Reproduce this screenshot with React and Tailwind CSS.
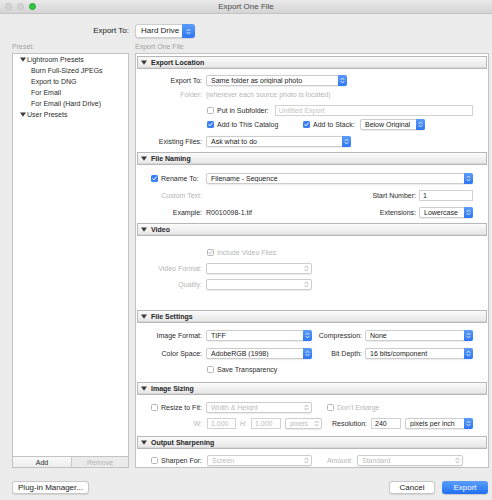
import React from 'react';

const Arrows = ({ color }) => (
    <svg width="5" height="7" viewBox="0 0 5 7" fill="none" stroke={color} strokeWidth="0.9" strokeLinecap="round" strokeLinejoin="round">
        <path d="M1 2.6 L2.5 1.1 L4 2.6" />
        <path d="M1 4.4 L2.5 5.9 L4 4.4" />
    </svg>
);

const Tri = () => (
    <svg width="6" height="5" viewBox="0 0 6 5" className="shrink-0">
        <polygon points="0,0.5 6,0.5 3,4.8" fill="#3a3a3a" />
    </svg>
);

function Popup({ value, className = '', disabled }) {
    return (
        <div className={`flex h-[11px] items-center rounded-[2px] border border-[#cdcdcd] bg-white shadow-[0_0.5px_1px_rgba(0,0,0,0.08)] ${className}`}>
            <span className={`flex-1 truncate pl-[4px] leading-none ${disabled ? 'text-[#bcbcbc]' : 'text-[#222]'}`}>{value}</span>
            {disabled ? (
                <span className="flex h-full w-[9px] items-center justify-center"><Arrows color="#a8a8a8" /></span>
            ) : (
                <span className="-my-px -mr-px flex h-[11px] w-[9px] items-center justify-center rounded-r-[2px] bg-gradient-to-b from-[#5a9cf9] to-[#2f76f5]"><Arrows color="#fff" /></span>
            )}
        </div>
    );
}

function Field({ value, placeholder, className = '', disabled }) {
    return (
        <div className={`flex h-[11px] items-center border border-[#d2d2d2] bg-white pl-[3px] leading-none ${className}`}>
            {value ? <span className={disabled ? 'text-[#bcbcbc]' : 'text-[#222]'}>{value}</span> : <span className="text-[#c4c4c4]">{placeholder}</span>}
        </div>
    );
}

function Check({ on, disabled }) {
    if (on && !disabled) {
        return (
            <span className="flex h-[7px] w-[7px] shrink-0 items-center justify-center rounded-[1.5px] bg-[#3b80f6]">
                <svg width="5" height="5" viewBox="0 0 5 5" fill="none" stroke="#fff" strokeWidth="1" strokeLinecap="round" strokeLinejoin="round"><path d="M0.8 2.6 L2 3.8 L4.2 1" /></svg>
            </span>
        );
    }
    return (
        <span className="flex h-[7px] w-[7px] shrink-0 items-center justify-center rounded-[1.5px] border border-[#b8b8b8] bg-white">
            {on && <svg width="5" height="5" viewBox="0 0 5 5" fill="none" stroke="#bdbdbd" strokeWidth="1" strokeLinecap="round" strokeLinejoin="round"><path d="M0.8 2.6 L2 3.8 L4.2 1" /></svg>}
        </span>
    );
}

const Label = ({ children, dim, className = 'w-[65px]' }) => (
    <span className={`shrink-0 text-right leading-none ${dim ? 'text-[#b6b6b6]' : 'text-[#2b2b2b]'} ${className}`}>{children}</span>
);

const Header = ({ title }) => (
    <div className="flex h-[13px] shrink-0 items-center gap-[4px] border border-[#b7b7b7] bg-gradient-to-b from-[#fbfbfb] to-[#e6e6e6] pl-[3px] shadow-[inset_0_-1px_0_#d8d8d8]">
        <Tri />
        <span className="font-bold leading-none text-[#1f1f1f]">{title}</span>
    </div>
);

export default function App() {
    return (
        <div className="relative h-[500px] w-[492px] overflow-hidden bg-[#ececec] font-['Liberation_Sans',Arial,sans-serif] text-[7px] text-[#2b2b2b]">
            {/* title bar */}
            <div className="grid h-[14px] grid-cols-[1fr_auto_1fr] items-center border-b border-[#c4c4c4] bg-gradient-to-b from-[#e9e9e9] to-[#d4d4d4]">
                <div className="flex items-center gap-[5px] pl-[5px]">
                    <span className="h-[7px] w-[7px] rounded-full border border-[#c6c6c6] bg-[#d3d3d3]" />
                    <span className="h-[7px] w-[7px] rounded-full border border-[#c6c6c6] bg-[#d3d3d3]" />
                    <span className="h-[7px] w-[7px] rounded-full border border-[#22a636] bg-[#2bc840]" />
                </div>
                <span className="text-[8px] leading-none text-[#4b4b4b]">Export One File</span>
                <span />
            </div>

            {/* export to */}
            <div className="mt-[10px] flex h-[14px] items-center text-[8px]">
                <span className="w-[129px] text-right leading-none text-[#222]">Export To:</span>
                <div className="ml-[6px] flex h-[14px] w-[60px] items-center rounded-[3px] border border-[#cdcdcd] bg-white shadow-[0_0.5px_1px_rgba(0,0,0,0.1)]">
                    <span className="flex-1 pl-[5px] leading-none text-[#222]">Hard Drive</span>
                    <span className="-my-px -mr-px flex h-[14px] w-[13px] items-center justify-center rounded-r-[3px] bg-gradient-to-b from-[#5a9cf9] to-[#2f76f5]"><Arrows color="#fff" /></span>
                </div>
            </div>

            <div className="mt-[3px] flex h-[10px] items-center text-[#a3a3a3]">
                <span className="ml-[12px] w-[123px] leading-none">Preset:</span>
                <span className="leading-none">Export One File</span>
            </div>

            {/* main */}
            <div className="mt-[2px] flex h-[415px] gap-[6px] pl-[12px]">
                <div className="flex w-[117px] flex-col border border-[#c3c3c3] bg-white">
                    <div className="flex flex-1 flex-col text-[#2b2b2b]">
                        <div className="flex h-[11px] items-center gap-[1px] pl-[7px]"><Tri /><span className="leading-none">Lightroom Presets</span></div>
                        <div className="flex h-[11px] items-center pl-[18px] leading-none">Burn Full-Sized JPEGs</div>
                        <div className="flex h-[11px] items-center pl-[18px] leading-none">Export to DNG</div>
                        <div className="flex h-[11px] items-center pl-[18px] leading-none">For Email</div>
                        <div className="flex h-[11px] items-center pl-[18px] leading-none">For Email (Hard Drive)</div>
                        <div className="flex h-[11px] items-center gap-[1px] pl-[7px]"><Tri /><span className="leading-none">User Presets</span></div>
                    </div>
                    <div className="flex h-[11px] border-t border-[#c3c3c3]">
                        <span className="flex w-[59px] items-center justify-center border-r border-[#c9c9c9] bg-gradient-to-b from-[#fafafa] to-[#ededed] leading-none text-[#2b2b2b]">Add</span>
                        <span className="flex flex-1 items-center justify-center bg-[#ebebeb] leading-none text-[#b4b4b4]">Remove</span>
                    </div>
                </div>

                <div className="flex w-[354px] flex-col border border-[#c3c3c3] bg-white px-[1px] pt-[2px]">
                    <Header title="Export Location" />
                    <div className="flex h-[83px] shrink-0 flex-col">
                        <div className="mt-[5px] flex h-[12px] items-center">
                            <Label>Export To:</Label>
                            <Popup className="ml-[4px] w-[141px]" value="Same folder as original photo" />
                        </div>
                        <div className="mt-[2px] flex h-[12px] items-center">
                            <Label dim>Folder:</Label>
                            <span className="ml-[4px] leading-none text-[#b6b6b6]">(wherever each source photo is located)</span>
                        </div>
                        <div className="mt-[4px] flex h-[12px] items-center">
                            <span className="ml-[70px] flex items-center gap-[3px]"><Check /><span className="leading-none">Put in Subfolder:</span></span>
                            <Field className="ml-[6px] mr-[14px] flex-1" placeholder="Untitled Export" />
                        </div>
                        <div className="mt-[2px] flex h-[12px] items-center">
                            <span className="ml-[70px] flex w-[96px] items-center gap-[3px]"><Check on /><span className="leading-none">Add to This Catalog</span></span>
                            <span className="flex w-[57px] items-center gap-[3px]"><Check on /><span className="leading-none">Add to Stack:</span></span>
                            <Popup className="w-[65px]" value="Below Original" />
                        </div>
                        <div className="mt-[5px] flex h-[12px] items-center">
                            <Label>Existing Files:</Label>
                            <Popup className="ml-[4px] w-[145px]" value="Ask what to do" />
                        </div>
                    </div>

                    <Header title="File Naming" />
                    <div className="flex h-[58px] shrink-0 flex-col">
                        <div className="mt-[7px] flex h-[12px] items-center">
                            <span className="flex w-[65px] items-center gap-[3px] pl-[14px]"><Check on /><span className="leading-none">Rename To:</span></span>
                            <Popup className="ml-[4px] mr-[14px] flex-1" value="Filename - Sequence" />
                        </div>
                        <div className="mt-[5px] flex h-[12px] items-center">
                            <Label dim>Custom Text:</Label>
                            <Label className="ml-auto">Start Number:</Label>
                            <Field className="ml-[3px] mr-[14px] w-[54px]" value="1" />
                        </div>
                        <div className="mt-[5px] flex h-[12px] items-center">
                            <Label>Example:</Label>
                            <span className="ml-[4px] leading-none">R0010098-1.tif</span>
                            <Label className="ml-auto">Extensions:</Label>
                            <Popup className="ml-[3px] mr-[14px] w-[54px]" value="Lowercase" />
                        </div>
                    </div>

                    <Header title="Video" />
                    <div className="flex h-[74px] shrink-0 flex-col">
                        <div className="mt-[10px] flex h-[12px] items-center">
                            <span className="ml-[70px] flex items-center gap-[3px]"><Check on disabled /><span className="leading-none text-[#b6b6b6]">Include Video Files:</span></span>
                        </div>
                        <div className="mt-[4px] flex h-[12px] items-center">
                            <Label dim>Video Format:</Label>
                            <Popup className="ml-[4px] w-[106px]" value="" disabled />
                        </div>
                        <div className="mt-[4px] flex h-[12px] items-center">
                            <Label dim>Quality:</Label>
                            <Popup className="ml-[4px] w-[106px]" value="" disabled />
                        </div>
                    </div>

                    <Header title="File Settings" />
                    <div className="flex h-[59px] shrink-0 flex-col">
                        <div className="mt-[6px] flex h-[12px] items-center">
                            <Label>Image Format:</Label>
                            <Popup className="ml-[4px] w-[106px]" value="TIFF" />
                            <Label className="w-[50px]">Compression:</Label>
                            <Popup className="ml-[3px] mr-[14px] flex-1" value="None" />
                        </div>
                        <div className="mt-[6px] flex h-[12px] items-center">
                            <Label>Color Space:</Label>
                            <Popup className="ml-[4px] w-[106px]" value="AdobeRGB (1998)" />
                            <Label className="w-[50px]">Bit Depth:</Label>
                            <Popup className="ml-[3px] mr-[14px] flex-1" value="16 bits/component" />
                        </div>
                        <div className="mt-[4px] flex h-[12px] items-center">
                            <span className="ml-[70px] flex items-center gap-[3px]"><Check /><span className="leading-none">Save Transparency</span></span>
                        </div>
                    </div>

                    <Header title="Image Sizing" />
                    <div className="flex h-[41px] shrink-0 flex-col">
                        <div className="mt-[6px] flex h-[12px] items-center">
                            <span className="flex w-[65px] items-center gap-[3px] pl-[14px]"><Check /><span className="leading-none">Resize to Fit:</span></span>
                            <Popup className="ml-[4px] w-[106px]" value="Width & Height" disabled />
                            <span className="ml-[15px] flex items-center gap-[3px]"><Check disabled /><span className="leading-none text-[#b6b6b6]">Don’t Enlarge</span></span>
                        </div>
                        <div className="mt-[4px] flex h-[12px] items-center">
                            <Label dim>W:</Label>
                            <Field className="ml-[5px] w-[29px]" value="1,000" disabled />
                            <span className="ml-[4px] w-[10px] leading-none text-[#b6b6b6]">H:</span>
                            <Field className="ml-[1px] w-[30px]" value="1,000" disabled />
                            <Popup className="ml-[4px] w-[37px]" value="pixels" disabled />
                            <Label className="w-[45px]">Resolution:</Label>
                            <Field className="ml-[4px] w-[30px]" value="240" />
                            <Popup className="ml-[4px] mr-[14px] flex-1" value="pixels per inch" />
                        </div>
                    </div>

                    <Header title="Output Sharpening" />
                    <div className="flex flex-1 flex-col">
                        <div className="mt-[5px] flex h-[12px] items-center">
                            <span className="flex w-[65px] items-center gap-[3px] pl-[14px]"><Check /><span className="leading-none">Sharpen For:</span></span>
                            <Popup className="ml-[5px] w-[105px]" value="Screen" disabled />
                            <Label dim className="w-[41px]">Amount:</Label>
                            <Popup className="ml-[4px] w-[106px]" value="Standard" disabled />
                        </div>
                    </div>
                </div>
            </div>

            {/* bottom buttons */}
            <div className="mt-[13px] flex h-[13px] items-center pl-[12px] pr-[4px] text-[8px]">
                <button className="flex h-[13px] w-[77px] items-center justify-center rounded-[3px] border border-[#c8c8c8] bg-white leading-none text-[#222] shadow-[0_0.5px_1px_rgba(0,0,0,0.1)]">Plug-in Manager...</button>
                <button className="ml-auto flex h-[13px] w-[46px] items-center justify-center rounded-[3px] border border-[#c8c8c8] bg-white leading-none text-[#222] shadow-[0_0.5px_1px_rgba(0,0,0,0.1)]">Cancel</button>
                <button className="ml-[7px] flex h-[13px] w-[46px] items-center justify-center rounded-[3px] bg-gradient-to-b from-[#5b9df9] to-[#1f6ff2] leading-none text-white shadow-[0_0.5px_1px_rgba(0,0,0,0.15)]">Export</button>
            </div>
        </div>
    );
}
